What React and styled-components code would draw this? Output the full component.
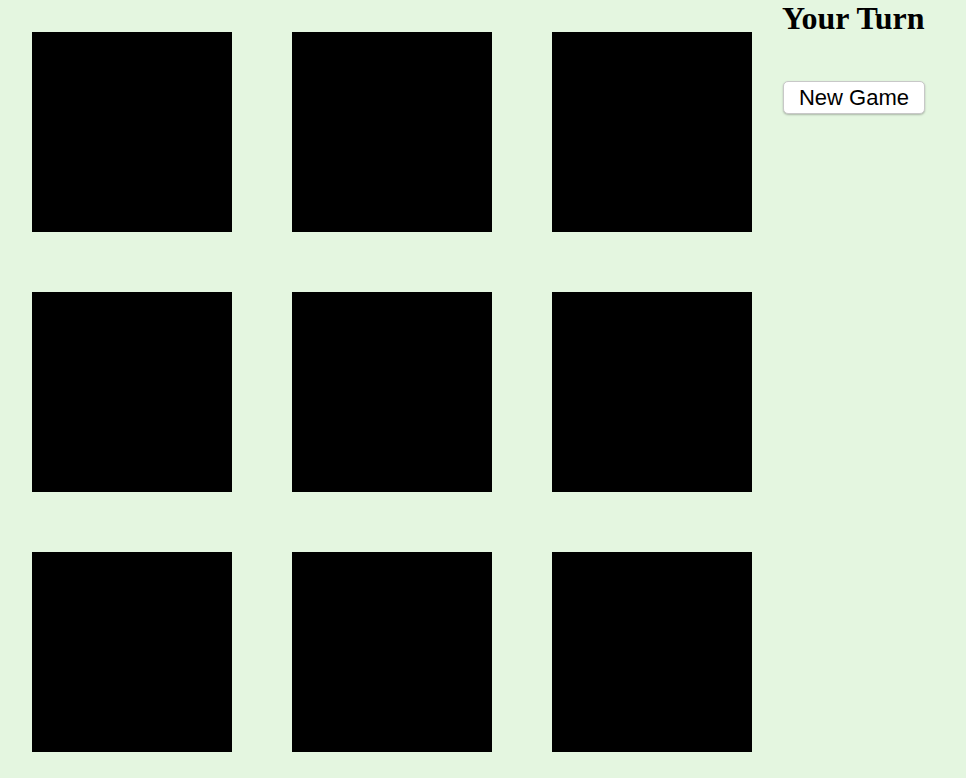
import styled, { createGlobalStyle } from 'styled-components'

const GlobalStyle = createGlobalStyle`
  html, body {
    margin: 0;
    padding: 0;
    background: #e4f6e0;
    min-height: 100%;
  }
`

const Page = styled.div`
  display: flex;
  align-items: flex-start;
  min-height: 778px;
  background: #e4f6e0;
`

const Board = styled.div`
  display: grid;
  grid-template-columns: repeat(3, 200px);
  grid-auto-rows: 200px;
  gap: 60px;
  padding: 32px;
`

const Cell = styled.div`
  background: #000;
`

const Side = styled.div`
  display: flex;
  flex-direction: column;
  align-items: flex-start;
  margin-left: -2px;
`

const Status = styled.h2`
  font-family: "Liberation Serif", "Times New Roman", serif;
  font-size: 32px;
  font-weight: 700;
  line-height: 36px;
  color: #000;
  margin: 0;
`

const Button = styled.button`
  margin-top: 45px;
  margin-left: 1px;
  height: 33px;
  width: 142px;
  padding: 1px 0 0 0;
  font-family: "Liberation Sans", Arial, sans-serif;
  font-size: 22px;
  color: #000;
  background: #fff;
  border: 1px solid #c8c8c8;
  border-radius: 5px;
  box-shadow: 0 1px 2px rgba(0, 0, 0, 0.25);
  cursor: pointer;
`

export default function App() {
  const cells = Array.from({ length: 9 })
  return (
    <Page>
      <GlobalStyle />
      <Board>
        {cells.map((_, i) => (
          <Cell key={i} />
        ))}
      </Board>
      <Side>
        <Status>Your Turn</Status>
        <Button>New Game</Button>
      </Side>
    </Page>
  )
}
